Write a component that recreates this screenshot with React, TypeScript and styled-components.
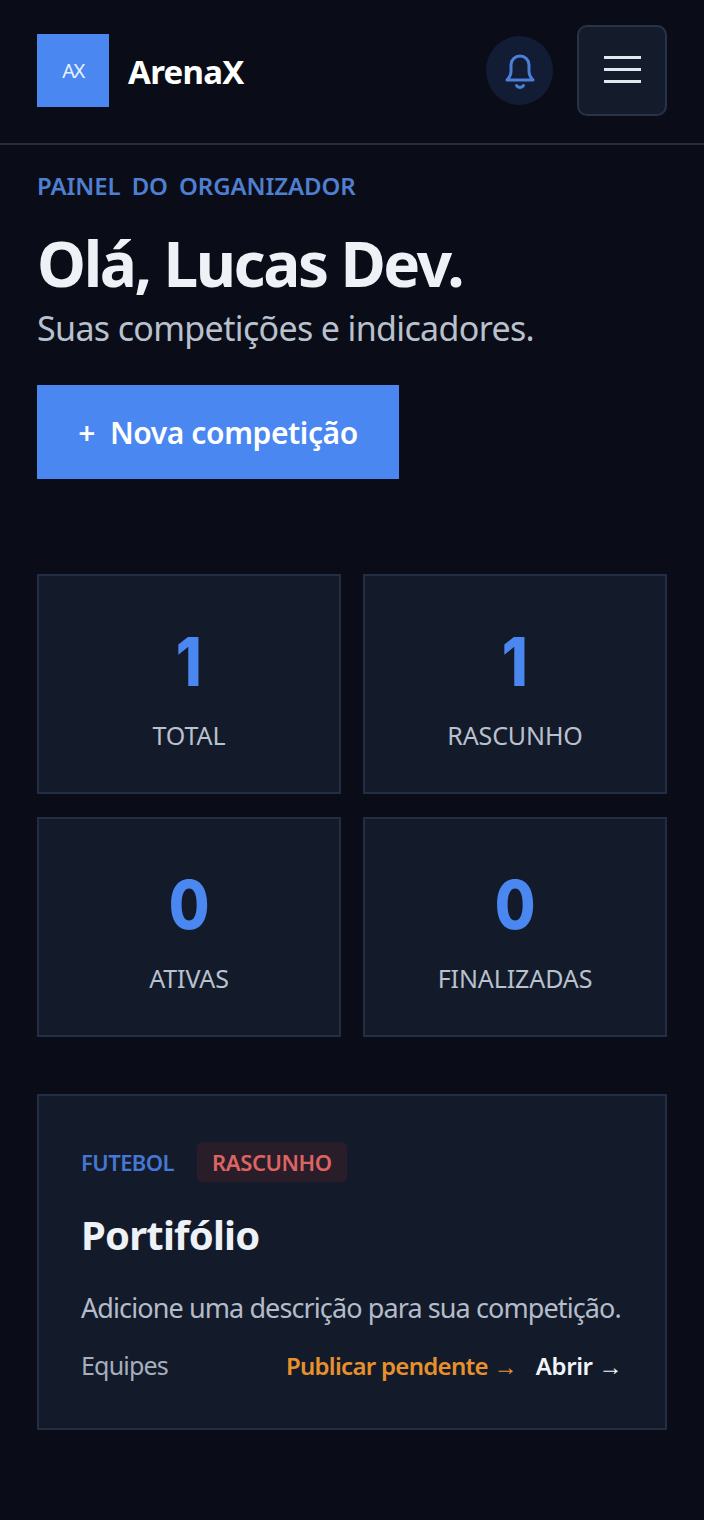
import React from 'react';
import styled, { createGlobalStyle } from 'styled-components';

const GlobalStyle = createGlobalStyle`
  * {
    box-sizing: border-box;
  }

  html, body {
    margin: 0;
    background: #0a0d17;
  }

  body {
    font-family: "Noto Sans", "Open Sans", sans-serif;
    color: #f1f5f9;
  }
`;

const Page = styled.div`
  width: 704px;
  min-height: 1520px;
  background: #0a0d17;
`;

const Header = styled.header`
  height: 145px;
  padding: 25px 37px 0;
  display: flex;
  align-items: flex-start;
  justify-content: space-between;
  border-bottom: 2px solid #262d3d;
`;

const Brand = styled.div`
  display: flex;
  align-items: center;
  gap: 19px;
  margin-top: 9px;
`;

const LogoBox = styled.div`
  width: 72px;
  height: 73px;
  background: #4b87f0;
  color: #e8f0ff;
  font-size: 20px;
  letter-spacing: -1.6px;
  display: flex;
  align-items: center;
  justify-content: center;
`;

const BrandName = styled.span`
  font-size: 33px;
  font-weight: 700;
  color: #ffffff;
  letter-spacing: -0.7px;
  padding-top: 2px;
`;

const HeaderActions = styled.div`
  display: flex;
  align-items: flex-start;
  gap: 24px;
`;

const BellButton = styled.button`
  width: 67px;
  height: 69px;
  margin-top: 11px;
  border: none;
  border-radius: 50%;
  background: #121d35;
  color: #4b7fd8;
  display: flex;
  align-items: center;
  justify-content: center;
  padding: 0;
`;

const MenuButton = styled.button`
  width: 90px;
  height: 91px;
  background: #141b2a;
  border: 2px solid #273349;
  border-radius: 10px;
  display: flex;
  flex-direction: column;
  align-items: center;
  justify-content: center;
  gap: 9px;
  padding: 0 0 3px;
`;

const MenuLine = styled.span`
  width: 37px;
  height: 3px;
  background: #e2e8f0;
`;

const Main = styled.main`
  padding: 27px 37px 0;
`;

const Eyebrow = styled.div`
  font-size: 24px;
  line-height: 30px;
  font-weight: 600;
  color: #4f7fd0;
  word-spacing: 5px;
  letter-spacing: -0.1px;
  margin-top: -1px;
`;

const Title = styled.h1`
  margin: 24px 0 0;
  font-size: 62px;
  line-height: 76px;
  font-weight: 700;
  color: #eef1f6;
  letter-spacing: -2.4px;
`;

const Subtitle = styled.p`
  margin: 4px 0 0;
  font-size: 34px;
  line-height: 46px;
  font-weight: 400;
  color: #b9c1ce;
  letter-spacing: -0.65px;
`;

const PrimaryButton = styled.button`
  width: 362px;
  height: 94px;
  margin-top: 34px;
  border: none;
  background: #4b87f0;
  color: #ffffff;
  font-family: inherit;
  font-size: 30px;
  font-weight: 600;
  letter-spacing: -0.4px;
  display: flex;
  align-items: center;
  justify-content: center;
  gap: 15px;
  padding: 0;
`;

const StatsGrid = styled.div`
  margin-top: 95px;
  display: grid;
  grid-template-columns: 304px 304px;
  grid-auto-rows: 220px;
  column-gap: 22px;
  row-gap: 23px;
`;

const StatCard = styled.div`
  background: #131b2b;
  border: 2px solid #232e44;
  display: flex;
  flex-direction: column;
  align-items: center;
  padding-top: 48px;
`;

const StatValue = styled.div`
  font-family: "Inter", "Noto Sans", sans-serif;
  font-size: 67px;
  line-height: 76px;
  font-weight: 800;
  color: #4b87f0;
  transform: scaleX(0.88);
`;

const StatLabel = styled.div`
  margin-top: 18px;
  font-size: 25px;
  line-height: 34px;
  color: #b9c1ce;
  letter-spacing: -0.1px;
`;

const CompetitionCard = styled.article`
  margin-top: 57px;
  height: 336px;
  background: #131b2b;
  border: 2px solid #232e44;
  padding: 46px 42px 0;
`;

const TagRow = styled.div`
  display: flex;
  align-items: center;
  gap: 23px;
`;

const SportTag = styled.span`
  font-size: 22px;
  line-height: 38px;
  font-weight: 600;
  letter-spacing: -0.55px;
  color: #4677d2;
`;

const StatusTag = styled.span`
  height: 40px;
  padding: 0 15px;
  border-radius: 6px;
  background: #2a1d2a;
  color: #de6464;
  font-size: 22px;
  font-weight: 600;
  letter-spacing: -0.4px;
  display: flex;
  align-items: center;
`;

const CardTitle = styled.h2`
  margin: 27px 0 0;
  font-size: 40px;
  line-height: 52px;
  font-weight: 700;
  color: #eef1f6;
  letter-spacing: -0.8px;
`;

const CardText = styled.p`
  margin: 28px 0 0;
  font-size: 27px;
  line-height: 38px;
  color: #b4bcc9;
  letter-spacing: -0.9px;
  white-space: nowrap;
`;

const CardFooter = styled.div`
  margin-top: 21px;
  display: flex;
  align-items: center;
  justify-content: space-between;
`;

const FooterNote = styled.span`
  font-size: 25px;
  color: #a7afbd;
  letter-spacing: -0.8px;
`;

const FooterLinks = styled.div`
  display: flex;
  align-items: center;
  gap: 19px;
  padding-right: 1px;
`;

const FooterLink = styled.a<{ $tone: string; $spacing: number }>`
  font-size: 24px;
  font-weight: 600;
  letter-spacing: ${(p) => p.$spacing}px;
  color: ${(p) => p.$tone};
`;

const stats = [
  { value: 1, label: 'TOTAL' },
  { value: 1, label: 'RASCUNHO' },
  { value: 0, label: 'ATIVAS' },
  { value: 0, label: 'FINALIZADAS' },
];

const App: React.FC = () => {
  return (
    <Page>
      <GlobalStyle />
      <Header>
        <Brand>
          <LogoBox>AX</LogoBox>
          <BrandName>ArenaX</BrandName>
        </Brand>
        <HeaderActions>
          <BellButton aria-label="Notificações">
            <svg width="36" height="40" viewBox="0 0 36 40" fill="none" stroke="currentColor" strokeWidth="3" strokeLinecap="round" strokeLinejoin="round">
              <path d="M5 29c2.500-2.500 4-5 4-9v-6a9 9 0 0 1 18 0v6c0 4 1.500 6.500 4 9z" />
              <path d="M14.500 34.500c1.500 2.500 5.500 2.500 7 0" />
            </svg>
          </BellButton>
          <MenuButton aria-label="Menu">
            <MenuLine />
            <MenuLine />
            <MenuLine />
          </MenuButton>
        </HeaderActions>
      </Header>
      <Main>
        <Eyebrow>PAINEL DO ORGANIZADOR</Eyebrow>
        <Title>Olá, Lucas Dev.</Title>
        <Subtitle>Suas competições e indicadores.</Subtitle>
        <PrimaryButton>
          <span>+</span>
          <span>Nova competição</span>
        </PrimaryButton>
        <StatsGrid>
          {stats.map((stat) => (
            <StatCard key={stat.label}>
              <StatValue>{stat.value}</StatValue>
              <StatLabel>{stat.label}</StatLabel>
            </StatCard>
          ))}
        </StatsGrid>
        <CompetitionCard>
          <TagRow>
            <SportTag>FUTEBOL</SportTag>
            <StatusTag>RASCUNHO</StatusTag>
          </TagRow>
          <CardTitle>Portifólio</CardTitle>
          <CardText>Adicione uma descrição para sua competição.</CardText>
          <CardFooter>
            <FooterNote>Equipes</FooterNote>
            <FooterLinks>
              <FooterLink $tone="#e8912c" $spacing={-0.7}>Publicar pendente →</FooterLink>
              <FooterLink $tone="#f1f5f9" $spacing={-0.4}>Abrir →</FooterLink>
            </FooterLinks>
          </CardFooter>
        </CompetitionCard>
      </Main>
    </Page>
  );
};

export default App;
